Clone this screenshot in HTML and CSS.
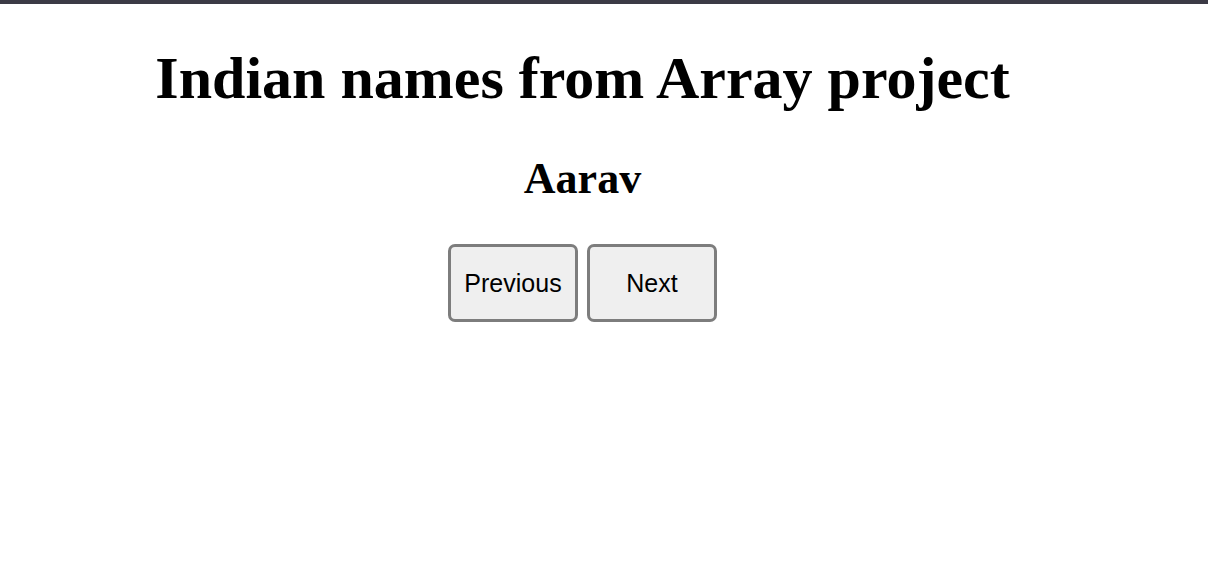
FILE: index.html
```html
<!DOCTYPE html>
<html>
<head>
<meta charset="utf-8">
<link rel="stylesheet" href="styles.css">
</head>
<body>
<div class="topbar"></div>
<main class="page">
  <h1 class="title">Indian names from Array project</h1>
  <h2 class="name">Aarav</h2>
  <div class="controls">
    <button class="btn">Previous</button>
    <button class="btn">Next</button>
  </div>
</main>
</body>
</html>
```

FILE: styles.css
```css
html, body {
  margin: 0;
  padding: 0;
  background: #ffffff;
}
body {
  font-family: "Liberation Serif", "Times New Roman", serif;
  color: #000;
}
.topbar {
  height: 4px;
  background: #3b3a45;
}
.page {
  width: 1165px;
  display: flex;
  flex-direction: column;
  align-items: center;
}
.title {
  margin: 39px 0 0;
  font-size: 60px;
  line-height: 70px;
  font-weight: bold;
}
.name {
  margin: 39px 0 0;
  font-size: 44px;
  line-height: 54px;
  font-weight: bold;
}
.controls {
  margin-top: 38px;
  display: flex;
  gap: 9px;
}
.btn {
  width: 130px;
  height: 78px;
  box-sizing: border-box;
  border: 3px solid #7d7d7d;
  border-radius: 7px;
  background: #efefef;
  font-family: "Liberation Sans", Arial, sans-serif;
  font-size: 25px;
  color: #000;
  padding: 0;
}
```
